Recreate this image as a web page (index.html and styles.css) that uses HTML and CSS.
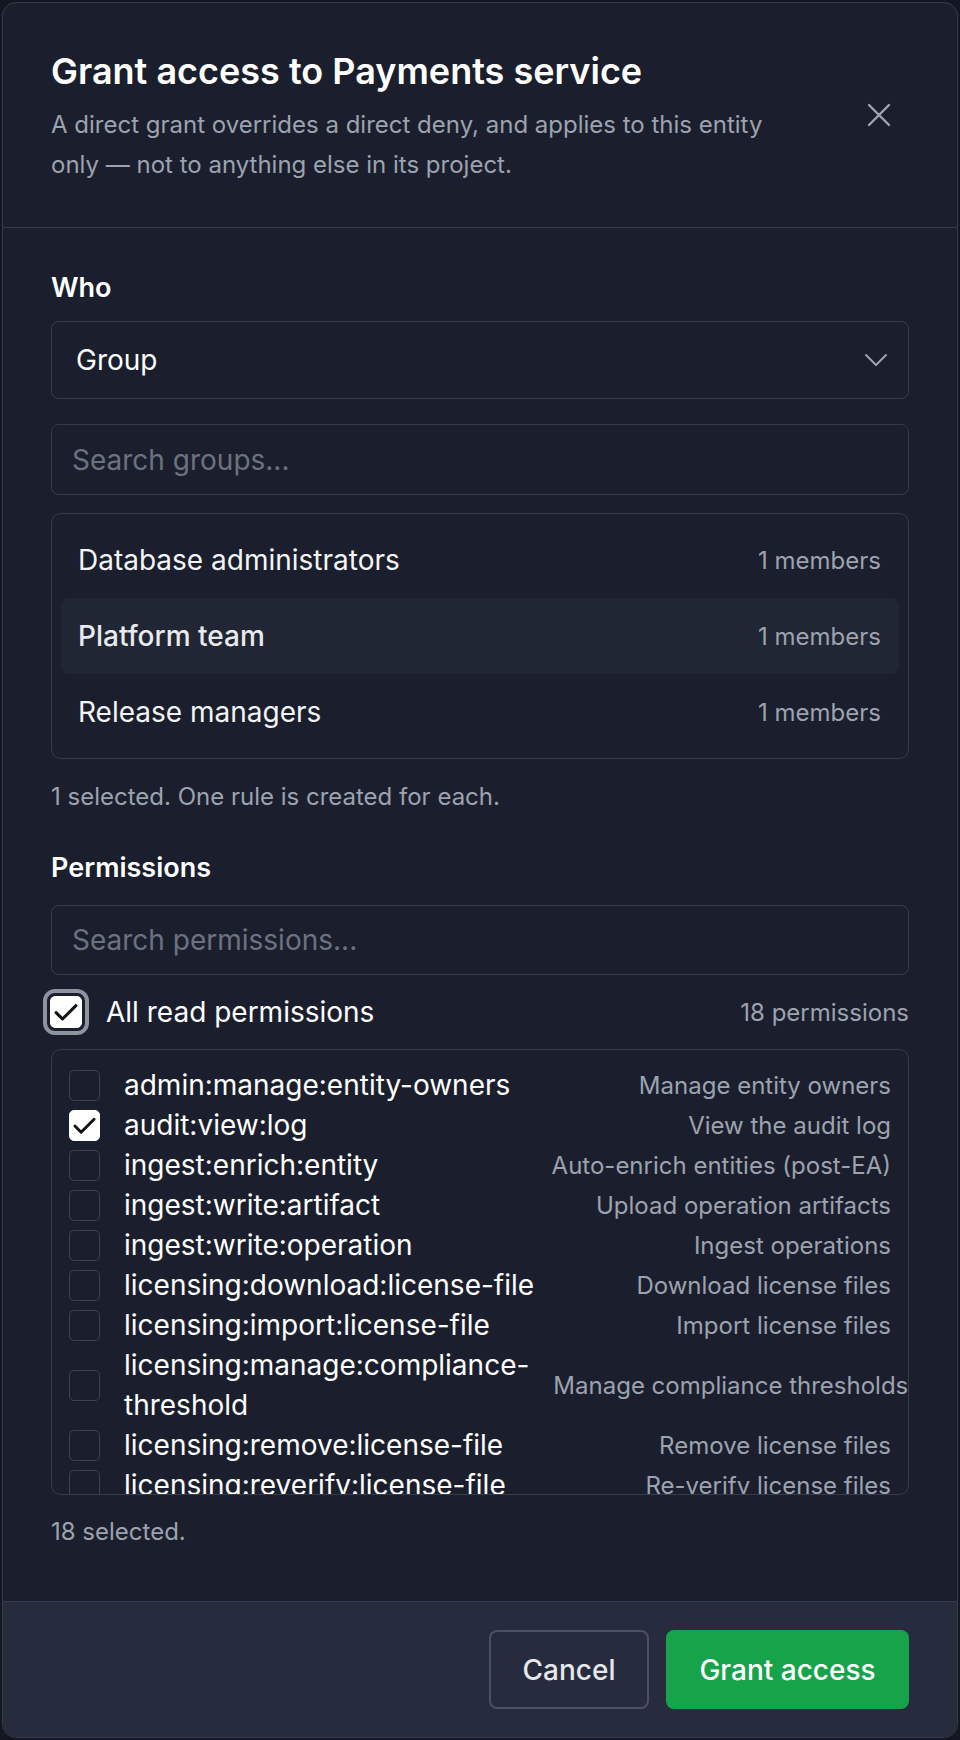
FILE: index.html
```html
<!DOCTYPE html>
<html lang="en">
<head>
<meta charset="utf-8">
<title>Grant access</title>
<link rel="stylesheet" href="styles.css">
</head>
<body>
<div class="page">
  <div class="modal">
    <header class="modal-header">
      <div class="header-text">
        <h2 class="title">Grant access to Payments service</h2>
        <p class="subtitle">A direct grant overrides a direct deny, and applies to this entity only — not to anything else in its project.</p>
      </div>
      <button class="close" type="button" aria-label="Close">
        <svg width="24" height="24" viewBox="0 0 24 24"><path d="M2 2 L22 22 M22 2 L2 22" stroke="#a1a4ad" stroke-width="2.4" stroke-linecap="round" fill="none"/></svg>
      </button>
    </header>

    <div class="modal-body">
      <section class="field">
        <div class="field-label">Who</div>
        <div class="select">
          <span>Group</span>
          <svg width="24" height="24" viewBox="0 0 24 24"><polyline points="2,7 12,17 22,7" stroke="#9ca3af" stroke-width="2" fill="none" stroke-linecap="round" stroke-linejoin="round"/></svg>
        </div>
        <div class="input input-groups"><span class="placeholder">Search groups...</span></div>
        <ul class="group-list">
          <li class="group-item"><span class="group-name">Database administrators</span><span class="meta">1 members</span></li>
          <li class="group-item active"><span class="group-name">Platform team</span><span class="meta">1 members</span></li>
          <li class="group-item"><span class="group-name">Release managers</span><span class="meta">1 members</span></li>
        </ul>
        <p class="hint hint-groups">1 selected. One rule is created for each.</p>
      </section>

      <section class="field field-perms">
        <div class="field-label">Permissions</div>
        <div class="input input-perms"><span class="placeholder">Search permissions...</span></div>
        <div class="all-row">
          <span class="cb cb-all checked">
            <svg viewBox="0 0 24 24"><polyline points="3.5,12.5 9,18 20.5,6.5" stroke="#111" stroke-width="2.6" fill="none" stroke-linecap="round" stroke-linejoin="round"/></svg>
          </span>
          <span class="all-label">All read permissions</span>
          <span class="meta all-count">18 permissions</span>
        </div>
        <div class="perm-list">
          <div class="perm-row"><span class="cb"></span><span class="perm-name">admin:manage:entity-owners</span><span class="perm-desc">Manage entity owners</span></div>
          <div class="perm-row"><span class="cb checked"><svg viewBox="0 0 24 24"><polyline points="3.5,12.5 9,18 20.5,6.5" stroke="#111" stroke-width="2.6" fill="none" stroke-linecap="round" stroke-linejoin="round"/></svg></span><span class="perm-name">audit:view:log</span><span class="perm-desc">View the audit log</span></div>
          <div class="perm-row"><span class="cb"></span><span class="perm-name">ingest:enrich:entity</span><span class="perm-desc">Auto-enrich entities (post-EA)</span></div>
          <div class="perm-row"><span class="cb"></span><span class="perm-name">ingest:write:artifact</span><span class="perm-desc">Upload operation artifacts</span></div>
          <div class="perm-row"><span class="cb"></span><span class="perm-name">ingest:write:operation</span><span class="perm-desc">Ingest operations</span></div>
          <div class="perm-row"><span class="cb"></span><span class="perm-name">licensing:download:license-file</span><span class="perm-desc">Download license files</span></div>
          <div class="perm-row"><span class="cb"></span><span class="perm-name">licensing:import:license-file</span><span class="perm-desc">Import license files</span></div>
          <div class="perm-row"><span class="cb"></span><span class="perm-name">licensing:manage:compliance-threshold</span><span class="perm-desc">Manage compliance thresholds</span></div>
          <div class="perm-row"><span class="cb"></span><span class="perm-name">licensing:remove:license-file</span><span class="perm-desc">Remove license files</span></div>
          <div class="perm-row"><span class="cb"></span><span class="perm-name">licensing:reverify:license-file</span><span class="perm-desc">Re-verify license files</span></div>
          <div class="perm-row"><span class="cb"></span><span class="perm-name">licensing:view:license-file</span><span class="perm-desc">View license files</span></div>
        </div>
        <p class="hint hint-perms">18 selected.</p>
      </section>
    </div>

    <footer class="modal-footer">
      <button class="btn btn-cancel" type="button">Cancel</button>
      <button class="btn btn-primary" type="button">Grant access</button>
    </footer>
  </div>
</div>
</body>
</html>
```

FILE: styles.css
```css
* {
  box-sizing: border-box;
}

html, body {
  margin: 0;
  padding: 0;
}

body {
  background: #141722;
  font-family: Inter, "Noto Sans", "Liberation Sans", sans-serif;
  color: #f3f4f6;
}

.page {
  padding: 2px;
}

.modal {
  width: 956px;
  height: 1736px;
  background: #1b1f2d;
  border: 1px solid #363b4a;
  border-radius: 14px;
  display: flex;
  flex-direction: column;
  overflow: hidden;
}

/* header */
.modal-header {
  display: flex;
  justify-content: space-between;
  align-items: flex-start;
  padding: 46px 48px 42px 48px;
  border-bottom: 1px solid #363b4a;
}

.title {
  margin: 0;
  font-size: 36px;
  line-height: 44px;
  font-weight: 600;
  color: #ffffff;
}

.subtitle {
  margin: 12px 0 0 0;
  max-width: 740px;
  font-size: 24px;
  line-height: 40px;
  color: #9ca3af;
}

.close {
  width: 40px;
  height: 40px;
  margin: 46px 10px 0 0;
  padding: 0;
  border: none;
  background: transparent;
  display: flex;
  align-items: center;
  justify-content: center;
  flex-shrink: 0;
}

/* body */
.modal-body {
  flex: 1;
  padding: 42px 48px 0 48px;
}

.field-label {
  font-size: 27px;
  line-height: 36px;
  font-weight: 600;
  color: #ffffff;
}

.select {
  margin-top: 15px;
  height: 78px;
  border: 1px solid #363b4a;
  border-radius: 8px;
  display: flex;
  align-items: center;
  justify-content: space-between;
  padding: 0 20px 0 24px;
  font-size: 28px;
  color: #ffffff;
}

.input {
  height: 71px;
  border: 1px solid #363b4a;
  border-radius: 8px;
  display: flex;
  align-items: center;
  padding: 0 20px;
  font-size: 28px;
}

.input-groups {
  margin-top: 25px;
}

.placeholder {
  color: #6b7280;
}

.group-list {
  list-style: none;
  margin: 18px 0 0 0;
  padding: 8px 9px;
  border: 1px solid #363b4a;
  border-radius: 10px;
}

.group-item {
  height: 76px;
  display: flex;
  align-items: center;
  justify-content: space-between;
  padding: 0 18px 0 17px;
  border-radius: 8px;
  font-size: 28px;
  color: #f3f4f6;
}

.group-item.active {
  background: #212634;
  font-weight: 500;
  color: #e8eaee;
}

.meta {
  font-size: 24px;
  font-weight: 400;
  color: #9ca3af;
}

.hint {
  margin: 0;
  font-size: 24px;
  line-height: 36px;
  color: #9ca3af;
}

.hint-groups {
  margin-top: 20px;
}

.field-perms {
  margin-top: 35px;
}

.input-perms {
  margin-top: 19px;
  height: 70px;
}

.all-row {
  margin-top: 14px;
  height: 46px;
  display: flex;
  align-items: center;
}

.all-label {
  margin-left: 24px;
  font-size: 28px;
  color: #ffffff;
}

.all-count {
  margin-left: auto;
}

.cb {
  width: 31px;
  height: 31px;
  border: 1px solid #3d4250;
  border-radius: 5px;
  flex-shrink: 0;
  display: flex;
  align-items: center;
  justify-content: center;
}

.cb svg {
  width: 27px;
  height: 27px;
}

.cb.checked {
  background: #ffffff;
  border-color: #ffffff;
}

.cb-all {
  width: 32px;
  height: 32px;
  margin-left: -1px;
  outline: 4px solid #8f939d;
  outline-offset: 3px;
}

.cb-all svg {
  width: 28px;
  height: 28px;
}

.perm-list {
  margin-top: 14px;
  height: 446px;
  overflow: hidden;
  border: 1px solid #363b4a;
  border-radius: 10px;
  padding: 15px 17px;
}

.perm-row {
  display: flex;
  align-items: center;
}

.perm-row .cb {
  margin-right: 24px;
}

.perm-name {
  flex: 1;
  font-size: 28px;
  line-height: 40px;
  color: #ffffff;
}

.perm-desc {
  margin-left: 24px;
  white-space: nowrap;
  font-size: 24px;
  color: #9ca3af;
}

.hint-perms {
  margin-top: 19px;
}

/* footer */
.modal-footer {
  display: flex;
  justify-content: flex-end;
  gap: 17px;
  padding: 28px 48px;
  background: #262b3d;
  border-top: 1px solid #363b4a;
}

.btn {
  height: 79px;
  border-radius: 8px;
  font-family: Inter, "Noto Sans", "Liberation Sans", sans-serif;
  font-size: 28px;
  font-weight: 500;
  cursor: pointer;
}

.btn-cancel {
  width: 160px;
  background: transparent;
  border: 2px solid #4b5062;
  color: #e5e7eb;
}

.btn-primary {
  width: 243px;
  background: #16a34a;
  border: none;
  color: #ffffff;
}
```
